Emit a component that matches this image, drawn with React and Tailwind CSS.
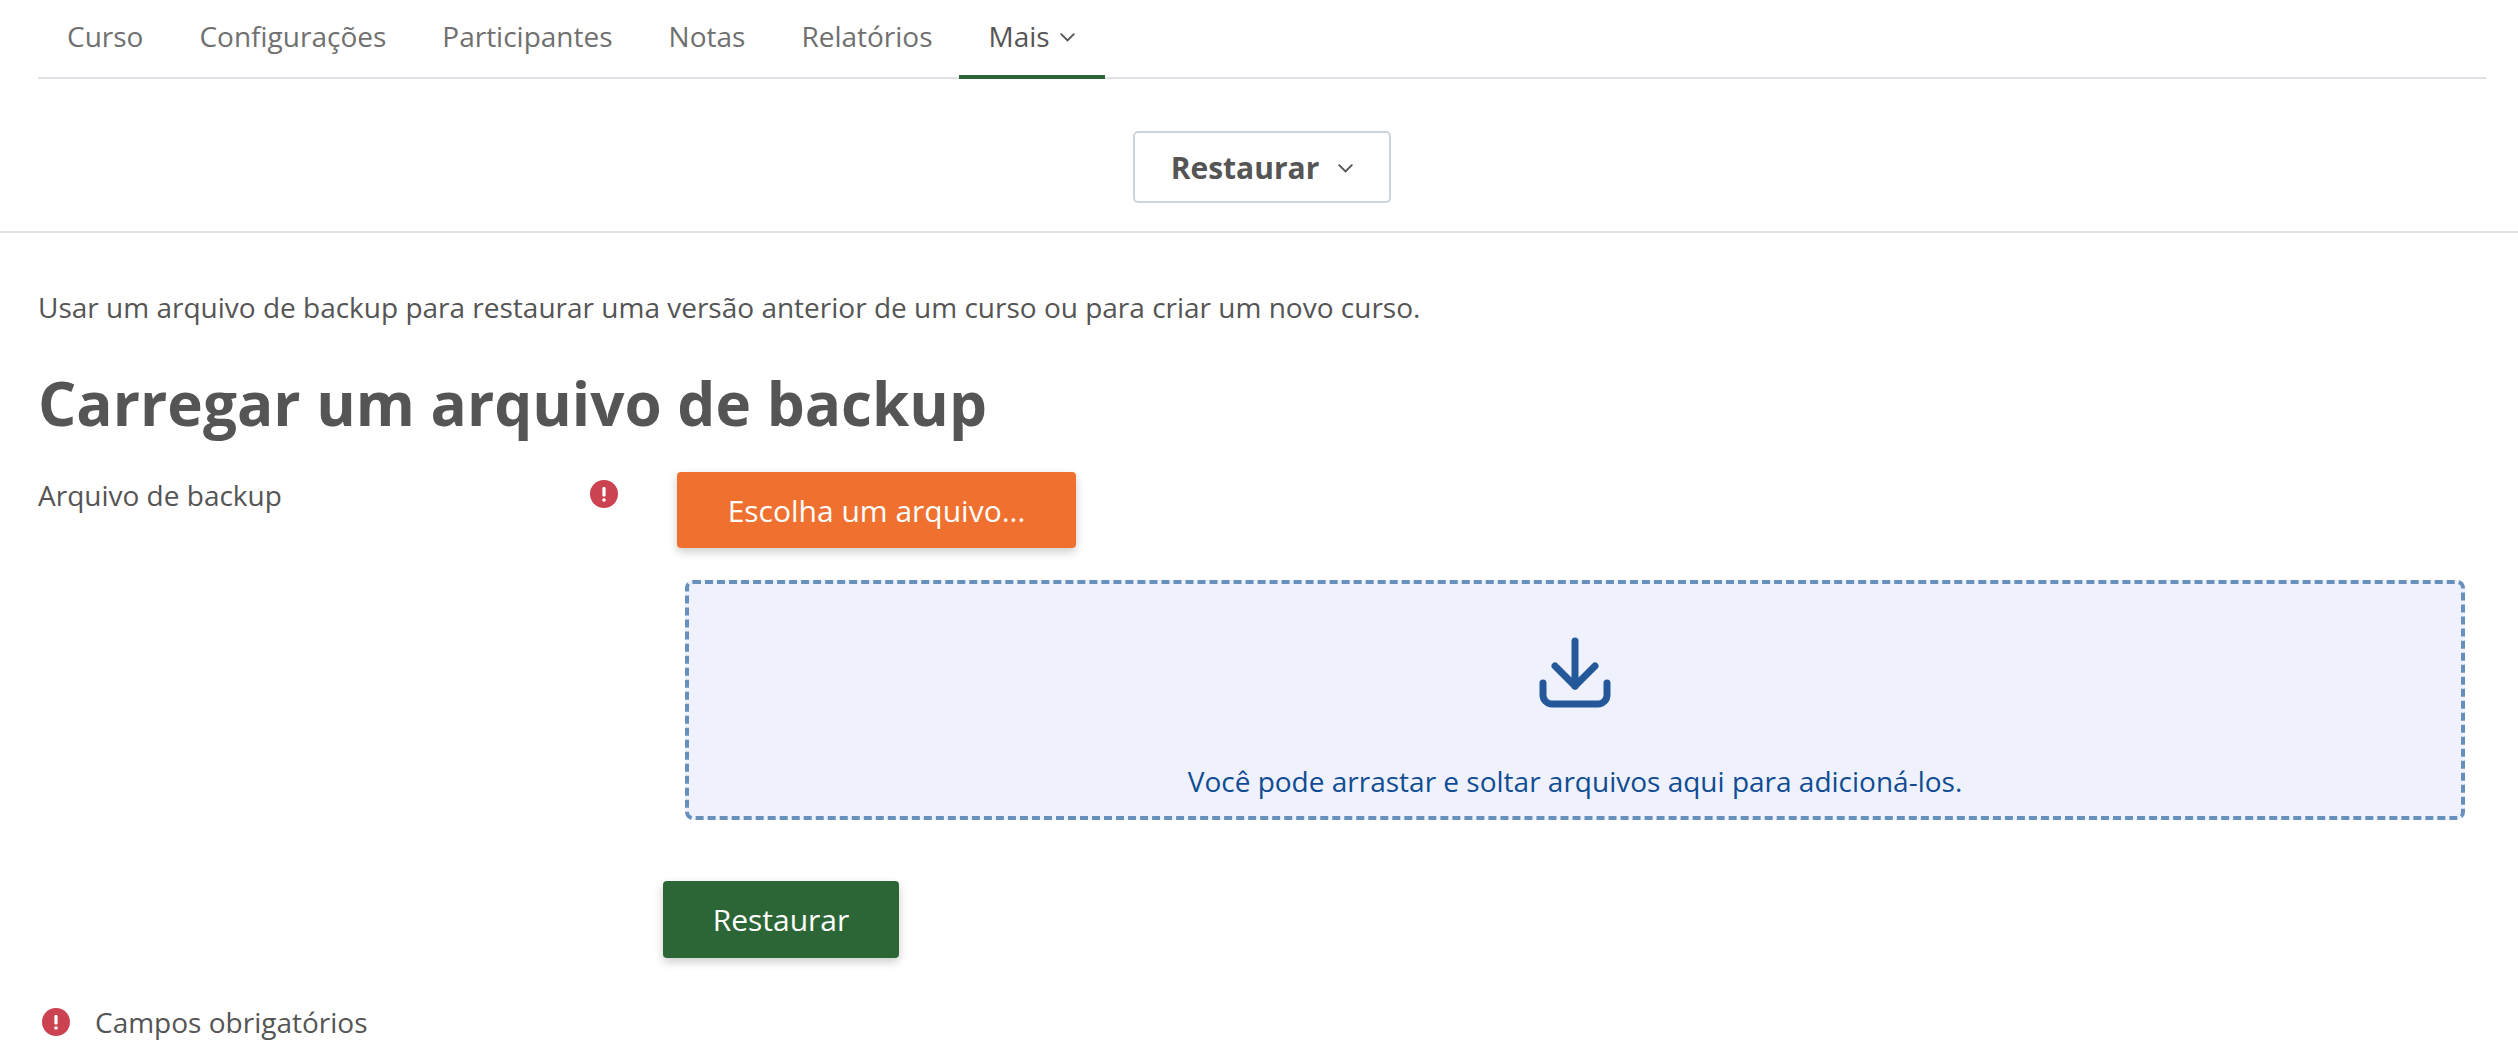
const TABS = ["Curso", "Configurações", "Participantes", "Notas", "Relatórios"];

function Chevron({ className }) {
  return (
    <svg className={className} viewBox="0 0 15 9" fill="none" stroke="currentColor" strokeWidth="1.9" strokeLinecap="round">
      <path d="M1.2 1.2 7.5 7.5l6.3-6.3" />
    </svg>
  );
}

function RequiredIcon({ className }) {
  return (
    <svg className={className} viewBox="0 0 28 28">
      <circle cx="14" cy="14" r="14" fill="#cb4351" />
      <rect x="12.4" y="7" width="3.2" height="9.5" rx="1.2" fill="#fff" />
      <circle cx="14" cy="20" r="1.8" fill="#fff" />
    </svg>
  );
}

export default function App() {
  return (
    <div className="h-[1050px] overflow-hidden bg-white font-['Open_Sans',sans-serif] text-[28px] text-[#555]">
      <nav className="mr-[32px] ml-[38px] flex h-[79px] border-b-2 border-[#dee2e6] pl-[1px]">
        {TABS.map((tab) => (
          <a key={tab} className="flex h-[77px] items-center px-[28px] pb-[5px] text-[#707070]">
            {tab}
          </a>
        ))}
        <a className="-ml-[2px] flex h-[79px] items-center gap-[10px] border-b-4 border-[#2c6637] px-[30px] pb-[3px]">
          Mais
          <Chevron className="mt-[2px] h-[9px] w-[15px]" />
        </a>
      </nav>

      <div className="flex h-[154px] items-start justify-center border-b-2 border-[#dee2e6] pt-[52px] pl-[6px]">
        <button className="flex h-[72px] w-[258px] items-center justify-center gap-[19px] rounded-[5px] border-2 border-[#cdd5db] text-[30px] font-bold text-[#555]">
          Restaurar
          <Chevron className="mt-[2px] h-[9px] w-[15px]" />
        </button>
      </div>

      <main className="px-[38px]">
        <p className="mt-[54px] leading-[40px]">
          Usar um arquivo de backup para restaurar uma versão anterior de um curso ou para criar um novo curso.
        </p>
        <h2 className="mt-[41px] text-[60.2px] leading-[70px] font-bold text-[#555]">Carregar um arquivo de backup</h2>

        <div className="mt-[34px] flex">
          <div className="flex w-[639px] shrink-0 items-start justify-between pr-[59px]">
            <span className="mt-[3px] leading-[40px]">Arquivo de backup</span>
            <RequiredIcon className="mt-[8px] h-[28px] w-[28px]" />
          </div>
          <div className="flex-1">
            <button className="h-[76px] w-[399px] rounded-[4px] bg-[#f0712f] text-[30px] text-white shadow-[0_4px_10px_rgba(0,0,0,0.2)]">
              Escolha um arquivo...
            </button>
            <div className="mt-[32px] ml-[8px] flex h-[240px] w-[1780px] flex-col items-center rounded-[8px] border-4 border-dashed border-[#6890bd] bg-[#eff2fd]">
              <svg className="mt-[53px] h-[72px] w-[72px]" viewBox="0 0 72 72" fill="none" stroke="#25589b" strokeWidth="7" strokeLinecap="round" strokeLinejoin="round">
                <path d="M36 4v45" />
                <path d="M16 29l20 20 20-20" />
                <path d="M4 46v12a9 9 0 0 0 9 9h46a9 9 0 0 0 9-9V46" />
              </svg>
              <span className="mt-[52px] leading-[40px] text-[#0f4c92]">Você pode arrastar e soltar arquivos aqui para adicioná-los.</span>
            </div>
          </div>
        </div>

        <div className="mt-[61px] pl-[625px]">
          <button className="h-[77px] w-[236px] rounded-[4px] bg-[#2c6637] text-[30px] text-white shadow-[0_4px_10px_rgba(0,0,0,0.2)]">
            Restaurar
          </button>
        </div>

        <div className="mt-[44px] flex items-center gap-[25px] pl-[4px]">
          <RequiredIcon className="h-[28px] w-[28px]" />
          <span className="leading-[40px]">Campos obrigatórios</span>
        </div>
      </main>
    </div>
  );
}
